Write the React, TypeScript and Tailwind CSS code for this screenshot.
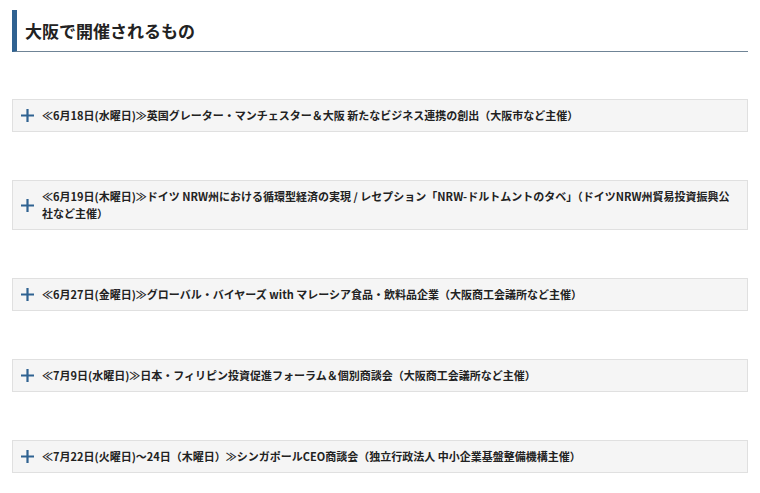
import React from "react";

const items = [
  "≪6月18日(水曜日)≫英国グレーター・マンチェスター＆大阪 新たなビジネス連携の創出（大阪市など主催）",
  "≪6月19日(木曜日)≫ドイツ NRW州における循環型経済の実現 / レセプション「NRW-ドルトムントのタベ」（ドイツNRW州貿易投資振興公社など主催）",
  "≪6月27日(金曜日)≫グローバル・バイヤーズ with マレーシア食品・飲料品企業（大阪商工会議所など主催）",
  "≪7月9日(水曜日)≫日本・フィリピン投資促進フォーラム＆個別商談会（大阪商工会議所など主催）",
  "≪7月22日(火曜日)～24日（木曜日）≫シンガポールCEO商談会（独立行政法人 中小企業基盤整備機構主催）",
];

function Plus() {
  return (
    <svg width="13" height="13" viewBox="0 0 13 13" className="shrink-0">
      <path d="M6.5 0V13M0 6.5H13" stroke="#2f6291" strokeWidth="2.2" />
    </svg>
  );
}

export default function App() {
  return (
    <div
      className="bg-white min-h-[493px] px-[12px] pt-[10px] text-[#222]"
      style={{ fontFamily: '"Noto Sans CJK JP", "Noto Sans", sans-serif' }}
    >
      <h2 className="border-l-[5px] border-[#2f6291] border-b border-b-[#6f8496] pl-[8px] h-[42px] flex items-center text-[17px] font-bold leading-none">
        大阪で開催されるもの
      </h2>
      <div className="flex flex-col gap-[48px] mt-[47px]">
        {items.map((t, i) => (
          <div
            key={i}
            className="flex items-center gap-[8px] bg-[#f5f5f5] border border-[#e0e0e0] pl-[8px] pr-[8px] py-[7px]"
          >
            <Plus />
            <div className="text-[11px] font-bold leading-[17px]">{t}</div>
          </div>
        ))}
      </div>
    </div>
  );
}
